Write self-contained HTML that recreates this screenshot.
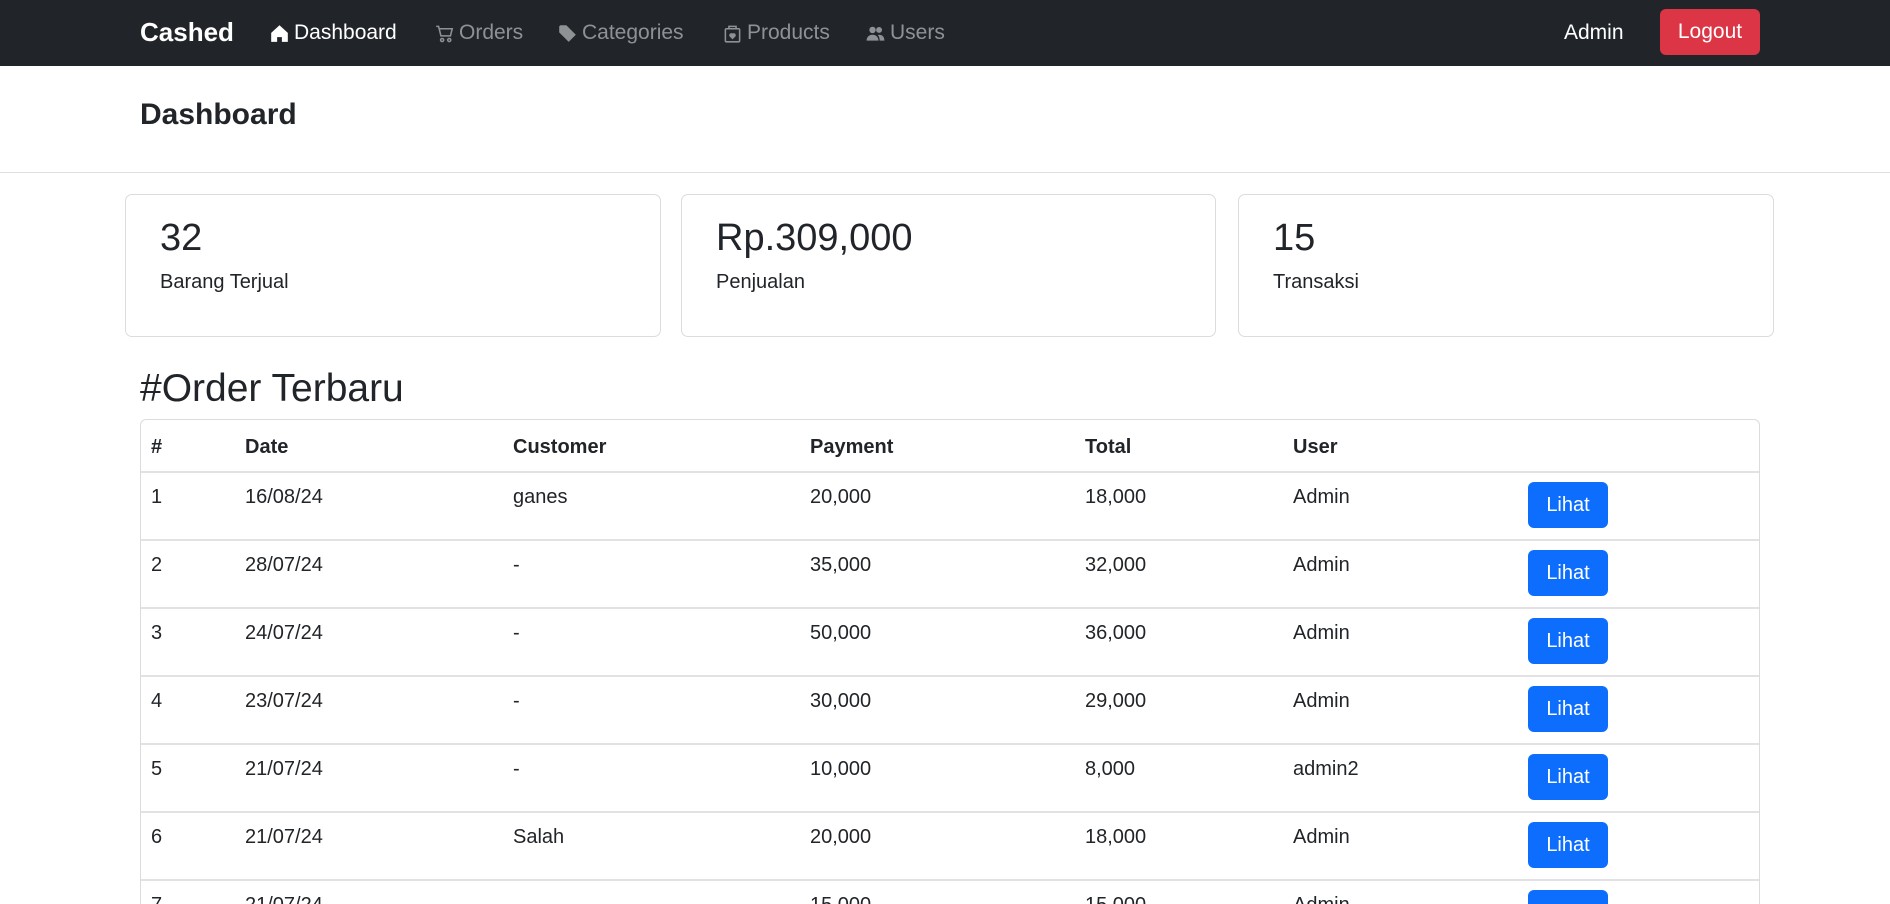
<!DOCTYPE html>
<html><head><meta charset="utf-8"><style>
*{box-sizing:border-box;margin:0;padding:0}
html,body{width:1890px;height:904px;overflow:hidden}
body{background:#fff;font-family:"Liberation Sans",sans-serif;color:#212529;position:relative}
.a{position:absolute;white-space:nowrap}
nav{position:absolute;left:0;top:0;width:1890px;height:66px;background:#212529}
.ni{position:absolute;top:21px;font-size:21px;color:#8f9295;display:flex;align-items:center;gap:5px}
.ni svg{width:19px;height:19px}
.card{position:absolute;top:194px;height:143px;border:1px solid #dcdcdc;border-radius:7px}
.card .n{position:absolute;left:34px;top:22px;font-size:38px}
.card .l{position:absolute;left:34px;top:76px;font-size:20px}
.tbl{position:absolute;left:140px;top:419px;width:1620px;height:485px;border:1px solid #dcdcdc;border-bottom:none;border-radius:6px 6px 0 0;overflow:hidden}
.hl{position:absolute;left:0;width:1618px;height:2px;background:#e2e2e2}
.c{position:absolute;font-size:20px;white-space:nowrap}
.h{font-weight:bold}
.btn{position:absolute;left:1387px;width:80px;height:46px;background:#0d6efd;color:#fff;border-radius:6px;font-size:20px;text-align:center;line-height:46px}
</style></head><body>
<nav>
<div class="a" style="left:140px;top:17px;font-size:26px;font-weight:bold;color:#fff">Cashed</div>
<div class="ni" style="left:270px;color:#fff"><svg viewBox="0 0 16 16"><path fill="#fff" d="M8 1 1 7.5V15h5v-4h4v4h5V7.5z"/></svg>Dashboard</div>
<div class="ni" style="left:435px"><svg viewBox="0 0 16 16" fill="none" stroke="#8f9295" stroke-width="1.3"><path d="M1 2h2l2 8h8l1.5-6H4"/><circle cx="6" cy="13.5" r="1.3"/><circle cx="12" cy="13.5" r="1.3"/></svg>Orders</div>
<div class="ni" style="left:558px"><svg viewBox="0 0 16 16"><path fill="#8f9295" d="M1 2v5l8 8 6-6-8-8H2zM4.5 5.5a1 1 0 1 0 .01 0z"/></svg>Categories</div>
<div class="ni" style="left:723px"><svg viewBox="0 0 16 16" fill="none" stroke="#8f9295" stroke-width="1.3"><rect x="2" y="4" width="12" height="11" rx="1"/><path d="M5 4V2h6v2"/><path fill="#8f9295" d="M8 12l-2-2a1 1 0 0 1 2-1 1 1 0 0 1 2 1z"/></svg>Products</div>
<div class="ni" style="left:866px"><svg viewBox="0 0 16 16"><circle cx="5.5" cy="5" r="2.7" fill="#8f9295"/><circle cx="11" cy="5" r="2.5" fill="#8f9295"/><path fill="#8f9295" d="M0.5 14c0-3 2-5 5-5s5 2 5 5zM11 9c2.5 0 4.5 1.5 4.5 5H11.5c0-2-.5-3.5-1.5-4.7z"/></svg>Users</div>
<div class="a" style="left:1564px;top:21px;font-size:21px;color:#fff">Admin</div>
<div class="a" style="left:1660px;top:9px;width:100px;height:46px;background:#dc3545;border-radius:6px;color:#fff;font-size:21px;text-align:center;line-height:46px">Logout</div>
</nav>
<div class="a" style="left:140px;top:98px;font-size:30px;font-weight:bold">Dashboard</div>
<div class="a" style="left:0;top:172px;width:1890px;height:1px;background:#dedede"></div>
<div class="card" style="left:125px;width:536px"><div class="n">32</div><div class="l">Barang Terjual</div></div>
<div class="card" style="left:681px;width:535px"><div class="n">Rp.309,000</div><div class="l">Penjualan</div></div>
<div class="card" style="left:1238px;width:536px"><div class="n">15</div><div class="l">Transaksi</div></div>
<div class="a" style="left:140px;top:367px;font-size:39px">#Order Terbaru</div>
<div class="tbl">
<div class="c h" style="left:10px;top:16px">#</div>
<div class="c h" style="left:104px;top:16px">Date</div>
<div class="c h" style="left:372px;top:16px">Customer</div>
<div class="c h" style="left:669px;top:16px">Payment</div>
<div class="c h" style="left:944px;top:16px">Total</div>
<div class="c h" style="left:1152px;top:16px">User</div>
<div class="hl" style="top:51px"></div>
<div class="hl" style="top:119px"></div>
<div class="hl" style="top:187px"></div>
<div class="hl" style="top:255px"></div>
<div class="hl" style="top:323px"></div>
<div class="hl" style="top:391px"></div>
<div class="hl" style="top:459px"></div>

<div class="c" style="left:10px;top:66px">1</div><div class="c" style="left:104px;top:66px">16/08/24</div><div class="c" style="left:372px;top:66px">ganes</div><div class="c" style="left:669px;top:66px">20,000</div><div class="c" style="left:944px;top:66px">18,000</div><div class="c" style="left:1152px;top:66px">Admin</div><div class="btn" style="top:62px">Lihat</div>
<div class="c" style="left:10px;top:134px">2</div><div class="c" style="left:104px;top:134px">28/07/24</div><div class="c" style="left:372px;top:134px">-</div><div class="c" style="left:669px;top:134px">35,000</div><div class="c" style="left:944px;top:134px">32,000</div><div class="c" style="left:1152px;top:134px">Admin</div><div class="btn" style="top:130px">Lihat</div>
<div class="c" style="left:10px;top:202px">3</div><div class="c" style="left:104px;top:202px">24/07/24</div><div class="c" style="left:372px;top:202px">-</div><div class="c" style="left:669px;top:202px">50,000</div><div class="c" style="left:944px;top:202px">36,000</div><div class="c" style="left:1152px;top:202px">Admin</div><div class="btn" style="top:198px">Lihat</div>
<div class="c" style="left:10px;top:270px">4</div><div class="c" style="left:104px;top:270px">23/07/24</div><div class="c" style="left:372px;top:270px">-</div><div class="c" style="left:669px;top:270px">30,000</div><div class="c" style="left:944px;top:270px">29,000</div><div class="c" style="left:1152px;top:270px">Admin</div><div class="btn" style="top:266px">Lihat</div>
<div class="c" style="left:10px;top:338px">5</div><div class="c" style="left:104px;top:338px">21/07/24</div><div class="c" style="left:372px;top:338px">-</div><div class="c" style="left:669px;top:338px">10,000</div><div class="c" style="left:944px;top:338px">8,000</div><div class="c" style="left:1152px;top:338px">admin2</div><div class="btn" style="top:334px">Lihat</div>
<div class="c" style="left:10px;top:406px">6</div><div class="c" style="left:104px;top:406px">21/07/24</div><div class="c" style="left:372px;top:406px">Salah</div><div class="c" style="left:669px;top:406px">20,000</div><div class="c" style="left:944px;top:406px">18,000</div><div class="c" style="left:1152px;top:406px">Admin</div><div class="btn" style="top:402px">Lihat</div>
<div class="c" style="left:10px;top:474px">7</div><div class="c" style="left:104px;top:474px">21/07/24</div><div class="c" style="left:372px;top:474px">-</div><div class="c" style="left:669px;top:474px">15,000</div><div class="c" style="left:944px;top:474px">15,000</div><div class="c" style="left:1152px;top:474px">Admin</div><div class="btn" style="top:470px">Lihat</div>
</div>
</body></html>
